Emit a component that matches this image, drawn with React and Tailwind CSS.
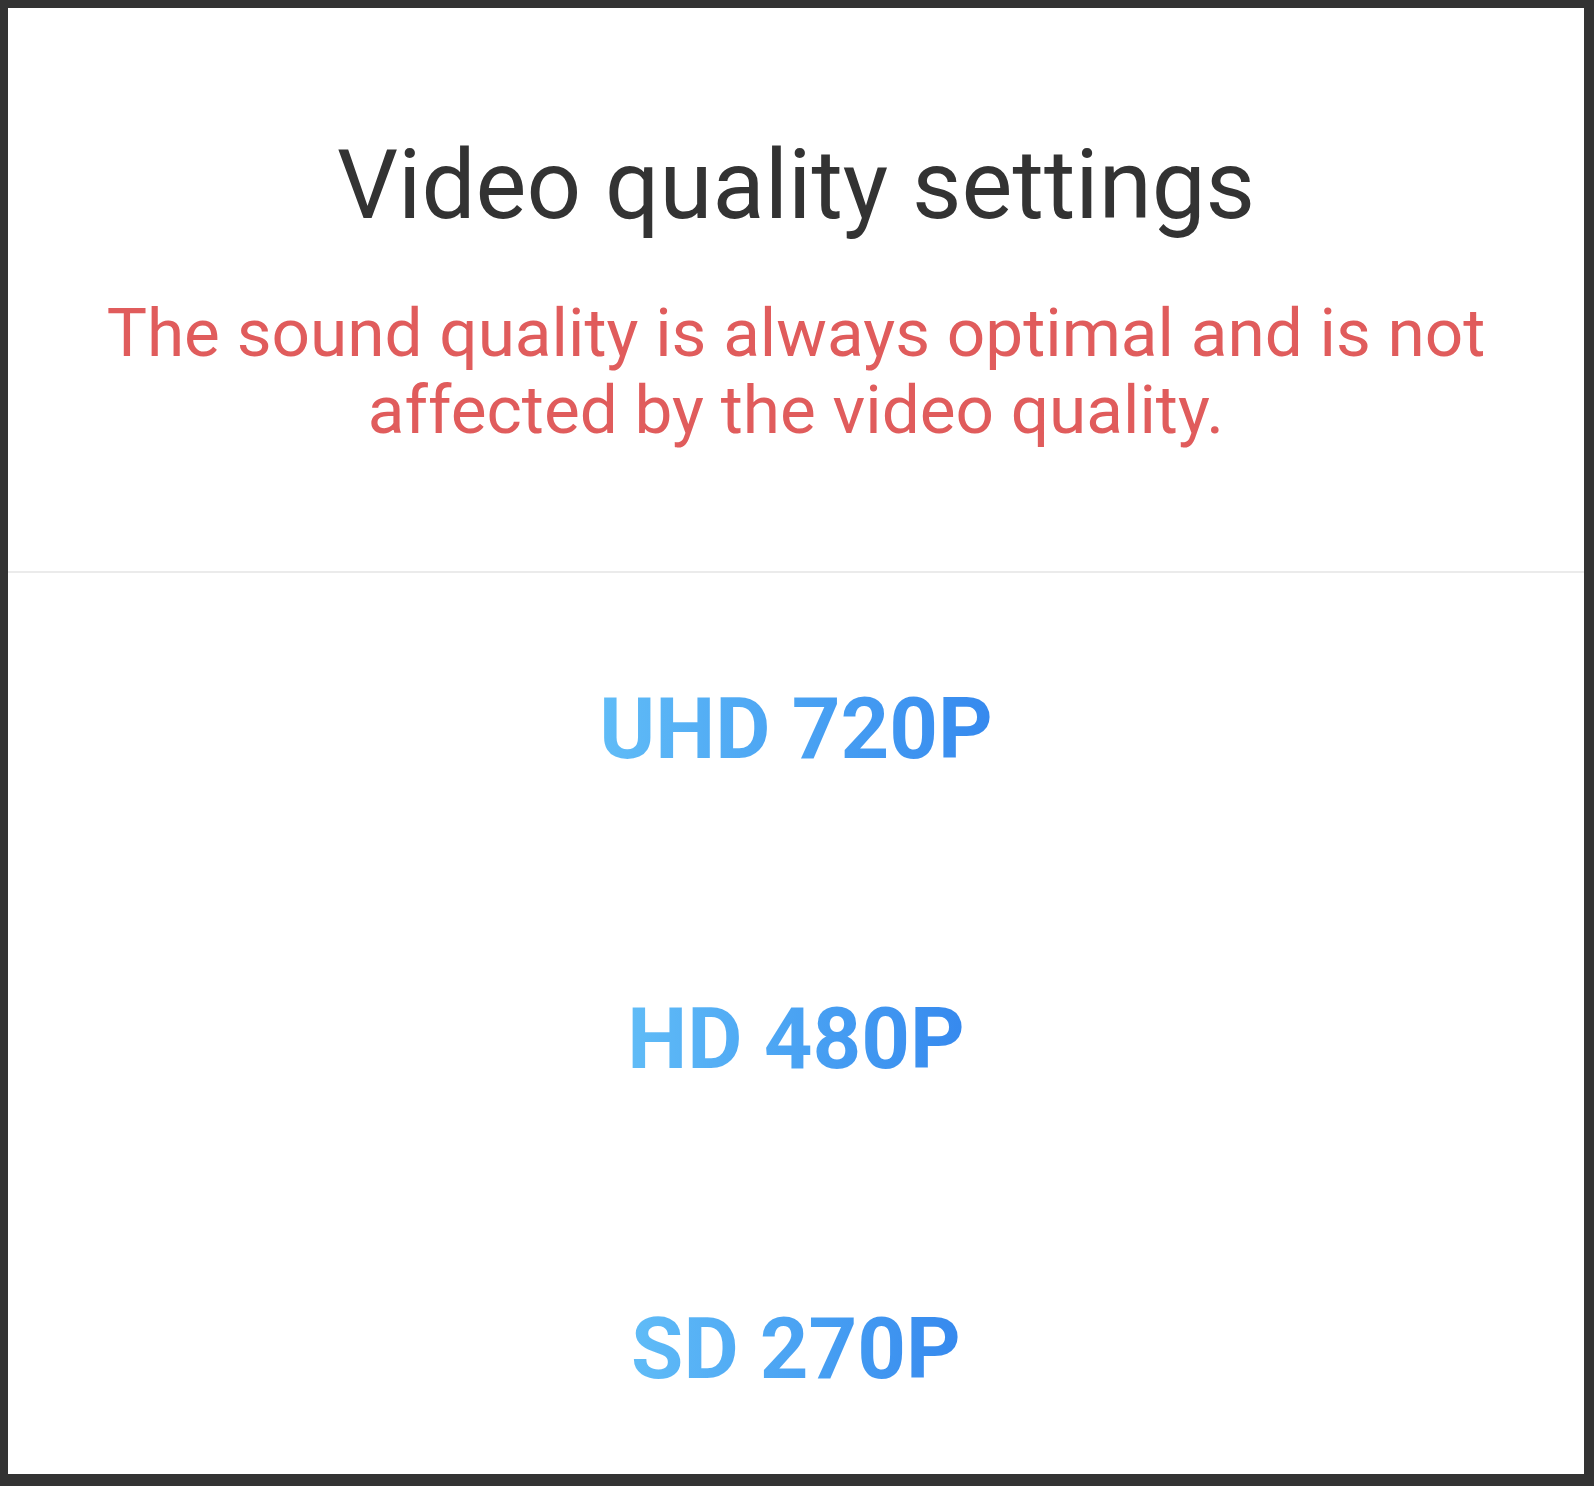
const options = ["UHD 720P", "HD 480P", "SD 270P"]

const App = () => {
    return (
        <div className="w-[1594px] h-[1486px] bg-[#333333] pt-[8px] pl-[8px] pr-[10px] pb-[12px] font-['Roboto',sans-serif]">
            <div className="w-full h-full bg-white flex flex-col items-center overflow-hidden">
                <h1 className="pt-[120px] text-[96px] leading-[115px] font-normal text-[#333333]">
                    Video quality settings
                </h1>
                <p className="mt-[51px] text-[67.5px] leading-[77px] text-[#e05c5c] text-center px-[60px]">
                    The sound quality is always optimal and is not<br />
                    affected by the video quality.
                </p>
                <div className="mt-[123px] w-full h-[2px] bg-[#ebebeb]" />
                <div className="mt-[106px] flex flex-col items-center gap-[210px]">
                    {options.map(label => (
                        <button
                            key={label}
                            className="text-[85px] leading-[100px] font-bold bg-gradient-to-r from-[#60bcf7] to-[#3689ee] bg-clip-text text-transparent"
                        >
                            {label}
                        </button>
                    ))}
                </div>
            </div>
        </div>
    )
}

export default App
